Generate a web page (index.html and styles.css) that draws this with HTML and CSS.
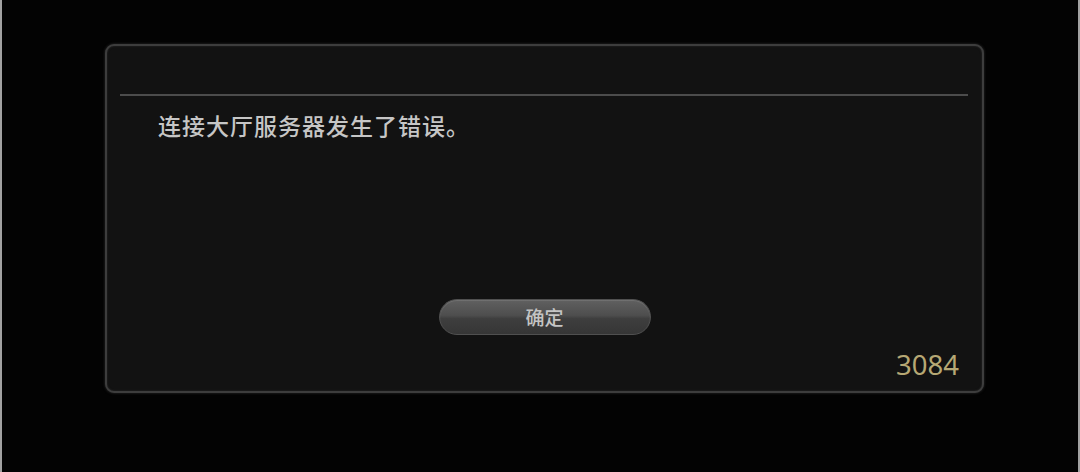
FILE: index.html
```html
<!DOCTYPE html>
<html lang="zh-CN">
<head>
<meta charset="utf-8">
<title>错误</title>
<link rel="stylesheet" href="styles.css">
</head>
<body>
<div class="screen">
  <div class="dialog">
    <div class="dialog-head"></div>
    <div class="divider"></div>
    <p class="message">连接大厅服务器发生了错误。</p>
    <div class="actions">
      <button class="btn">确定</button>
    </div>
    <div class="code">3084</div>
  </div>
</div>
</body>
</html>
```
FILE: styles.css
```css
html, body {
  margin: 0;
  padding: 0;
  background: #000;
}
.screen {
  box-sizing: border-box;
  width: 1080px;
  height: 472px;
  background: #030303;
  border-left: 2px solid #a2a2a2;
  border-right: 2px solid #a2a2a2;
  padding: 44px 0 0 103px;
  font-family: "Noto Sans CJK SC", "Noto Sans", sans-serif;
}
.dialog {
  box-sizing: border-box;
  width: 879px;
  height: 349px;
  background: #121212;
  border: 2px solid #3d3d3d;
  border-radius: 9px;
  box-shadow: 0 0 3px rgba(90, 90, 90, 0.5), inset 0 0 2px rgba(80, 80, 80, 0.5);
  display: flex;
  flex-direction: column;
}
.dialog-head {
  height: 48px;
}
.divider {
  height: 2px;
  margin: 0 14px 0 13px;
  background: #4c4c4c;
}
.message {
  margin: 13px 0 0 51px;
  font-size: 23px;
  font-weight: 500;
  letter-spacing: 1px;
  line-height: 32px;
  color: #c6c6c6;
}
.actions {
  display: flex;
  justify-content: center;
  margin-top: 158px;
}
.btn {
  box-sizing: border-box;
  width: 212px;
  height: 36px;
  border-radius: 18px;
  border: 1px solid #505050;
  background: linear-gradient(#606060 0%, #4e4e4e 45%, #3e3e3e 55%, #363636 100%);
  box-shadow: inset 0 1px 1px rgba(150, 150, 150, 0.35);
  color: #c4c4c4;
  font-family: "Noto Sans CJK SC", sans-serif;
  font-size: 19px;
  font-weight: 500;
  line-height: 32px;
  padding: 0;
}
.code {
  align-self: flex-end;
  margin: 14px 23px 0 0;
  font-family: "Noto Sans", sans-serif;
  font-size: 27.5px;
  line-height: 32px;
  color: #b6a874;
}
```
